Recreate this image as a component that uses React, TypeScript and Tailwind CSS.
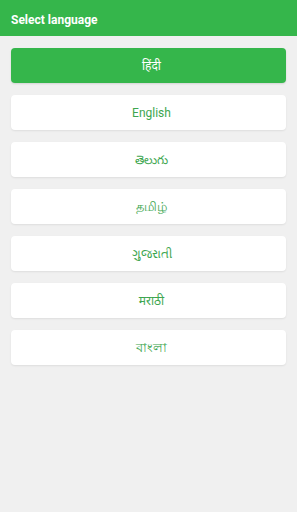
import React from "react";

const langs = ["हिंदी", "English", "తెలుగు", "தமிழ்", "ગુજરાતી", "मराठी", "বাংলা"];

export default function App() {
  return (
    <div className="min-h-[512px] bg-[#f0f0f0]" style={{ fontFamily: "Roboto, 'Noto Sans', sans-serif" }}>
      <div className="h-[36px] bg-[#35b64b] flex items-center px-[11px] pt-[3px]">
        <span className="text-white font-bold text-[12px] leading-none">Select language</span>
      </div>
      <div className="flex flex-col gap-[12px] px-[11px] pt-[12px]">
        {langs.map((l, i) => (
          <div
            key={l}
            className={
              (i === 0
                ? "bg-[#35b64b] text-white shadow-[0_1px_2px_rgba(0,0,0,0.12)] "
                : "bg-white text-[#3da64f] shadow-[0_1px_2px_rgba(0,0,0,0.08)] ") +
              "h-[35px] rounded-[4px] flex items-center justify-center pl-[6px] " +
              (i === 3 || i === 6 ? "text-[13px]" : "text-[12px]")
            }
          >
            {l}
          </div>
        ))}
      </div>
    </div>
  );
}
